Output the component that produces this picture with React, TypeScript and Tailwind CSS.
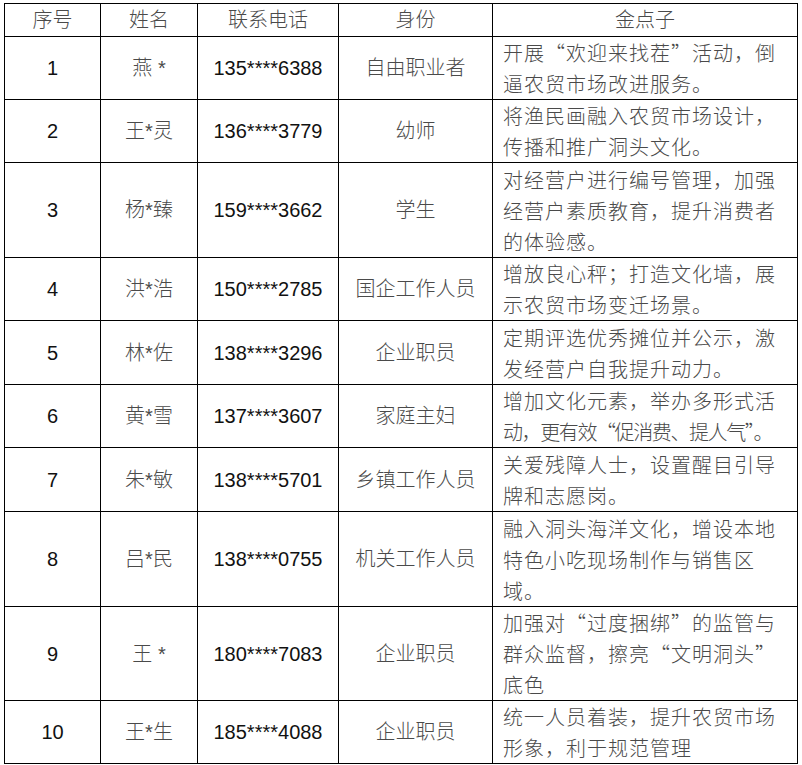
import React from 'react'

interface Row {
    no: string
    name: string
    phone: string
    role: string
    idea: string[]
    h: string
}

const rows: Row[] = [
    { no: '1', name: '燕 *', phone: '135****6388', role: '自由职业者', idea: ['开展“欢迎来找茬”活动，倒', '逼农贸市场改进服务。'], h: 'h-[63px]' },
    { no: '2', name: '王*灵', phone: '136****3779', role: '幼师', idea: ['将渔民画融入农贸市场设计，', '传播和推广洞头文化。'], h: 'h-[63px]' },
    { no: '3', name: '杨*臻', phone: '159****3662', role: '学生', idea: ['对经营户进行编号管理，加强', '经营户素质教育，提升消费者', '的体验感。'], h: 'h-[95px]' },
    { no: '4', name: '洪*浩', phone: '150****2785', role: '国企工作人员', idea: ['增放良心秤；打造文化墙，展', '示农贸市场变迁场景。'], h: 'h-[63px]' },
    { no: '5', name: '林*佐', phone: '138****3296', role: '企业职员', idea: ['定期评选优秀摊位并公示，激', '发经营户自我提升动力。'], h: 'h-[64px]' },
    { no: '6', name: '黄*雪', phone: '137****3607', role: '家庭主妇', idea: ['增加文化元素，举办多形式活', '动，更有效“促消费、提人气”。'], h: 'h-[63px]' },
    { no: '7', name: '朱*敏', phone: '138****5701', role: '乡镇工作人员', idea: ['关爱残障人士，设置醒目引导', '牌和志愿岗。'], h: 'h-[64px]' },
    { no: '8', name: '吕*民', phone: '138****0755', role: '机关工作人员', idea: ['融入洞头海洋文化，增设本地', '特色小吃现场制作与销售区', '域。'], h: 'h-[95px]' },
    { no: '9', name: '王 *', phone: '180****7083', role: '企业职员', idea: ['加强对“过度捆绑”的监管与', '群众监督，擦亮“文明洞头”', '底色'], h: 'h-[94px]' },
    { no: '10', name: '王*生', phone: '185****4088', role: '企业职员', idea: ['统一人员着装，提升农贸市场', '形象，利于规范管理'], h: 'h-[63px]' },
]

const cjk = 'text-[#4a4a4a] font-light'

export default function App() {
    return (
        <div lang="zh-CN" className="bg-white w-[802px] h-[765px] pt-[3px] pl-[4px] font-['Liberation_Sans','Noto_Sans_CJK_SC',sans-serif] text-[20px]">
            <table className="table-fixed border-collapse w-[793px]">
                <colgroup>
                    <col className="w-[96px]" />
                    <col className="w-[97px]" />
                    <col className="w-[141px]" />
                    <col className="w-[154px]" />
                    <col className="w-[305px]" />
                </colgroup>
                <thead>
                    <tr className="h-[33px]">
                        {['序号', '姓名', '联系电话', '身份', '金点子'].map((t) => (
                            <th key={t} className={`border border-black p-0 text-center leading-none ${cjk}`}>{t}</th>
                        ))}
                    </tr>
                </thead>
                <tbody>
                    {rows.map((r) => (
                        <tr key={r.no} className={r.h}>
                            <td className="border border-black p-0 text-center text-[#111]">{r.no}</td>
                            <td className={`border border-black p-0 text-center whitespace-pre ${cjk}`}>{r.name}</td>
                            <td className="border border-black p-0 text-center text-[#111]">{r.phone}</td>
                            <td className={`border border-black p-0 text-center ${cjk}`}>{r.role}</td>
                            <td className={`border border-black p-0 pl-[10px] align-middle font-['Noto_Sans_CJK_SC',sans-serif] ${cjk}`}>
                                {r.idea.map((line, i) => (
                                    <div
                                        key={i}
                                        className={`leading-[31px] whitespace-nowrap ${line.length > 13 ? 'tracking-[-1.4px]' : 'tracking-[1px]'}`}
                                    >
                                        {line}
                                    </div>
                                ))}
                            </td>
                        </tr>
                    ))}
                </tbody>
            </table>
        </div>
    )
}
